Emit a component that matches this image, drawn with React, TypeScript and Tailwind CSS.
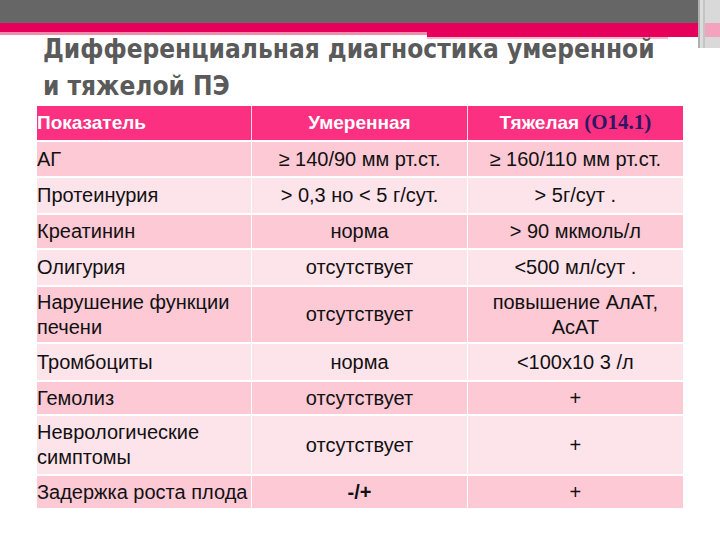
const rows = [
  { name: "АГ", mid: "≥ 140/90 мм рт.ст.", severe: "≥ 160/110 мм рт.ст.", h: "h-[36px]", bg: "bg-[#fcc9d5]" },
  { name: "Протеинурия", mid: "> 0,3 но < 5 г/сут.", severe: "> 5г/сут .", h: "h-[37px]", bg: "bg-[#fde3ea]" },
  { name: "Креатинин", mid: "норма", severe: "> 90 мкмоль/л", h: "h-[35px]", bg: "bg-[#fcc9d5]" },
  { name: "Олигурия", mid: "отсутствует", severe: "<500 мл/сут .", h: "h-[37px]", bg: "bg-[#fde3ea]" },
  { name: "Нарушение функции печени", mid: "отсутствует", severe: "повышение АлАТ, АсАТ", h: "h-[57px]", bg: "bg-[#fcc9d5]" },
  { name: "Тромбоциты", mid: "норма", severe: "<100x10 3 /л", h: "h-[38px]", bg: "bg-[#fde3ea]" },
  { name: "Гемолиз", mid: "отсутствует", severe: "+", h: "h-[34px]", bg: "bg-[#fcc9d5]" },
  { name: "Неврологические симптомы", mid: "отсутствует", severe: "+", h: "h-[60px]", bg: "bg-[#fde3ea]" },
  { name: "Задержка роста плода", mid: "-/+", severe: "+", h: "h-[34px]", bg: "bg-[#fcc9d5]", boldMid: true },
];

export default function App() {
  return (
    <div className="h-[540px] w-[720px] overflow-hidden bg-white font-['Liberation_Sans',Arial,sans-serif]">
      {/* slide frame */}
      <div className="flex h-[48px]">
        <div className="flex flex-1 flex-col">
          <div className="h-[23px] bg-[#666666]" />
          <div className="h-[9px] bg-[#e6005c]" />
          <div className="flex">
            <div className="h-[3px] w-[427px] bg-[#f08cac]" />
            <div className="flex flex-1 flex-col">
              <div className="h-[5px] bg-[#e6005c]" />
              <div className="mr-[30px] h-[2px] bg-[#f6b8cb]" />
            </div>
          </div>
        </div>
        <div className="flex w-[22px]">
          <div className="w-[2px] bg-[#b0b0b0]" />
          <div className="w-[3px] bg-[#dcdcdc]" />
          <div className="w-[2px] bg-[#c4c4c4]" />
          <div className="flex flex-1 flex-col bg-[#d9d9d9]">
            <div className="h-[23px]" />
            <div className="h-[14px] bg-[#f3a3bd]" />
          </div>
        </div>
      </div>

      <h1 className="-mt-[17px] pl-[43px] font-['DejaVu_Sans_Condensed','DejaVu_Sans',sans-serif] text-[26px] font-bold leading-[37px] text-[#5a5a5a]">
        Дифференциальная диагностика умеренной
        <br />
        и тяжелой ПЭ
      </h1>

      <div className="ml-[37px] mt-[1px] w-[646px]">
        <div className="grid h-[34px] grid-cols-3 bg-[#fb3080] text-[19px] font-bold text-white">
          <div className="flex items-center border-r border-[#f7dce6]">Показатель</div>
          <div className="flex items-center justify-center border-r border-[#f7dce6]">Умеренная</div>
          <div className="flex items-center justify-center gap-[5px]">
            Тяжелая
            <span className="font-['Liberation_Serif',serif] text-[21px] text-[#2c1865]">(O14.1)</span>
          </div>
        </div>
        {rows.map((r) => (
          <div key={r.name} className={`grid grid-cols-3 border-t-2 border-white text-[20px] leading-[25px] text-[#111111] ${r.bg} ${r.h}`}>
            <div className="flex items-center border-r border-white">{r.name}</div>
            <div className={`flex items-center justify-center border-r border-white text-center ${r.boldMid ? "font-bold" : ""}`}>{r.mid}</div>
            <div className="flex items-center justify-center px-[20px] text-center">{r.severe}</div>
          </div>
        ))}
      </div>
    </div>
  );
}
